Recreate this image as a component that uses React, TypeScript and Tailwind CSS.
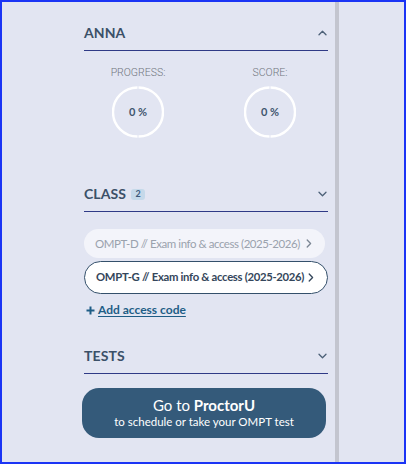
import React from 'react'

const Chevron = ({ dir }: { dir: 'up' | 'down' | 'right' }) => {
  if (dir === 'right')
    return (
      <svg width="6" height="9" viewBox="0 0 6 9" fill="none">
        <path d="M1.2 1 L4.6 4.5 L1.2 8" stroke="currentColor" strokeWidth="1.3" strokeLinecap="round" strokeLinejoin="round" />
      </svg>
    )
  return (
    <svg width="9" height="6" viewBox="0 0 9 6" fill="none">
      <path
        d={dir === 'up' ? 'M1 4.8 L4.5 1.2 L8 4.8' : 'M1 1.2 L4.5 4.8 L8 1.2'}
        stroke="currentColor"
        strokeWidth="1.3"
        strokeLinecap="round"
        strokeLinejoin="round"
      />
    </svg>
  )
}

const Ring = ({ value }: { value: string }) => (
  <div className="relative w-[52px] h-[52px] flex items-center justify-center">
    <svg className="absolute inset-0" width="52" height="52" viewBox="0 0 52 52">
      <path d="M26.5 1.5 A24.5 24.5 0 0 1 26.5 50.5" stroke="#ffffff" strokeWidth="2.4" fill="none" />
      <path d="M25.5 50.5 A24.5 24.5 0 0 1 25.5 1.5" stroke="#ffffff" strokeWidth="2.4" fill="none" />
    </svg>
    <span className="relative text-[11px] font-bold text-[#3f556e]">{value}</span>
  </div>
)

const SectionHeader = ({ title, open, badge }: { title: string; open?: boolean; badge?: string }) => (
  <div className="flex items-center justify-between border-b-[1.5px] border-[#2f3a86] pb-[8px]">
    <div className="flex items-center gap-[5px] h-[18px]">
      <span className="text-[14px] leading-[18px] font-bold tracking-[0.1px] text-[#3b5068]">{title}</span>
      {badge && (
        <span className="text-[9px] font-bold text-[#3c5a7c] bg-[#c5d9ea] rounded-[3px] w-[14px] h-[11px] flex items-center justify-center">
          {badge}
        </span>
      )}
    </div>
    <span className="text-[#4d6178] pr-[1px]">
      <Chevron dir={open ? 'up' : 'down'} />
    </span>
  </div>
)

export default function App() {
  return (
    <div className="w-[406px] h-[464px] border-2 border-[#1b34f5] bg-[#e2e5f2] flex font-['Lato',sans-serif] overflow-hidden">
      <div className="w-[333px] shrink-0 pl-[82px] pr-[7px] pt-[22px]">
        <SectionHeader title="ANNA" open />

        <div className="flex justify-center gap-[32px] pt-[15px] pr-[4px]">
          {['PROGRESS:', 'SCORE:'].map(label => (
            <div key={label} className="w-[100px] flex flex-col items-center">
              <span className="text-[10.5px] text-[#70757d] font-['Roboto',sans-serif] font-light leading-[14px]">{label}</span>
              <div className="mt-[6px]">
                <Ring value="0 %" />
              </div>
            </div>
          ))}
        </div>

        <div className="mt-[47px]">
          <SectionHeader title="CLASS" badge="2" />
        </div>

        <div className="mt-[17px] flex flex-col gap-[3px]">
          <div className="h-[29px] w-[241px] rounded-full bg-[#f3f4fa] flex items-center justify-between pl-[11px] pr-[13px] text-[11.5px] tracking-[-0.45px] whitespace-nowrap text-[#9aa2ad]">
            <span>OMPT-D // Exam info &amp; access (2025-2026)</span>
            <span className="text-[#7b8694] shrink-0">
              <Chevron dir="right" />
            </span>
          </div>
          <div className="h-[33px] w-[244px] rounded-full bg-white border-[1.5px] border-[#34506b] flex items-center justify-between pl-[11px] pr-[13px] text-[11.3px] tracking-[-0.3px] whitespace-nowrap font-bold text-[#34465b]">
            <span>OMPT-G // Exam info &amp; access (2025-2026)</span>
            <span className="text-[#34465b] shrink-0">
              <Chevron dir="right" />
            </span>
          </div>
        </div>

        <div className="mt-[8px] h-[16px] flex items-center gap-[3px] pl-[2px] text-[12px] font-bold text-[#1e5d86]">
          <svg width="9" height="9" viewBox="0 0 9 9">
            <path d="M4.5 0.5 V8.5 M0.5 4.5 H8.5" stroke="currentColor" strokeWidth="2" />
          </svg>
          <span className="underline underline-offset-2">Add access code</span>
        </div>

        <div className="mt-[29px]">
          <SectionHeader title="TESTS" />
        </div>

        <button className="mt-[14px] -ml-[2px] w-[244px] h-[50px] rounded-[17px] bg-[#345a7a] text-white flex flex-col items-center justify-center">
          <span className="text-[15px] leading-[18px]">
            Go to <b>ProctorU</b>
          </span>
          <span className="text-[11.5px] leading-[16px]">to schedule or take your OMPT test</span>
        </button>
      </div>
      <div className="w-[4px] shrink-0 bg-[#c3c5cf]" />
      <div className="flex-1" />
    </div>
  )
}
